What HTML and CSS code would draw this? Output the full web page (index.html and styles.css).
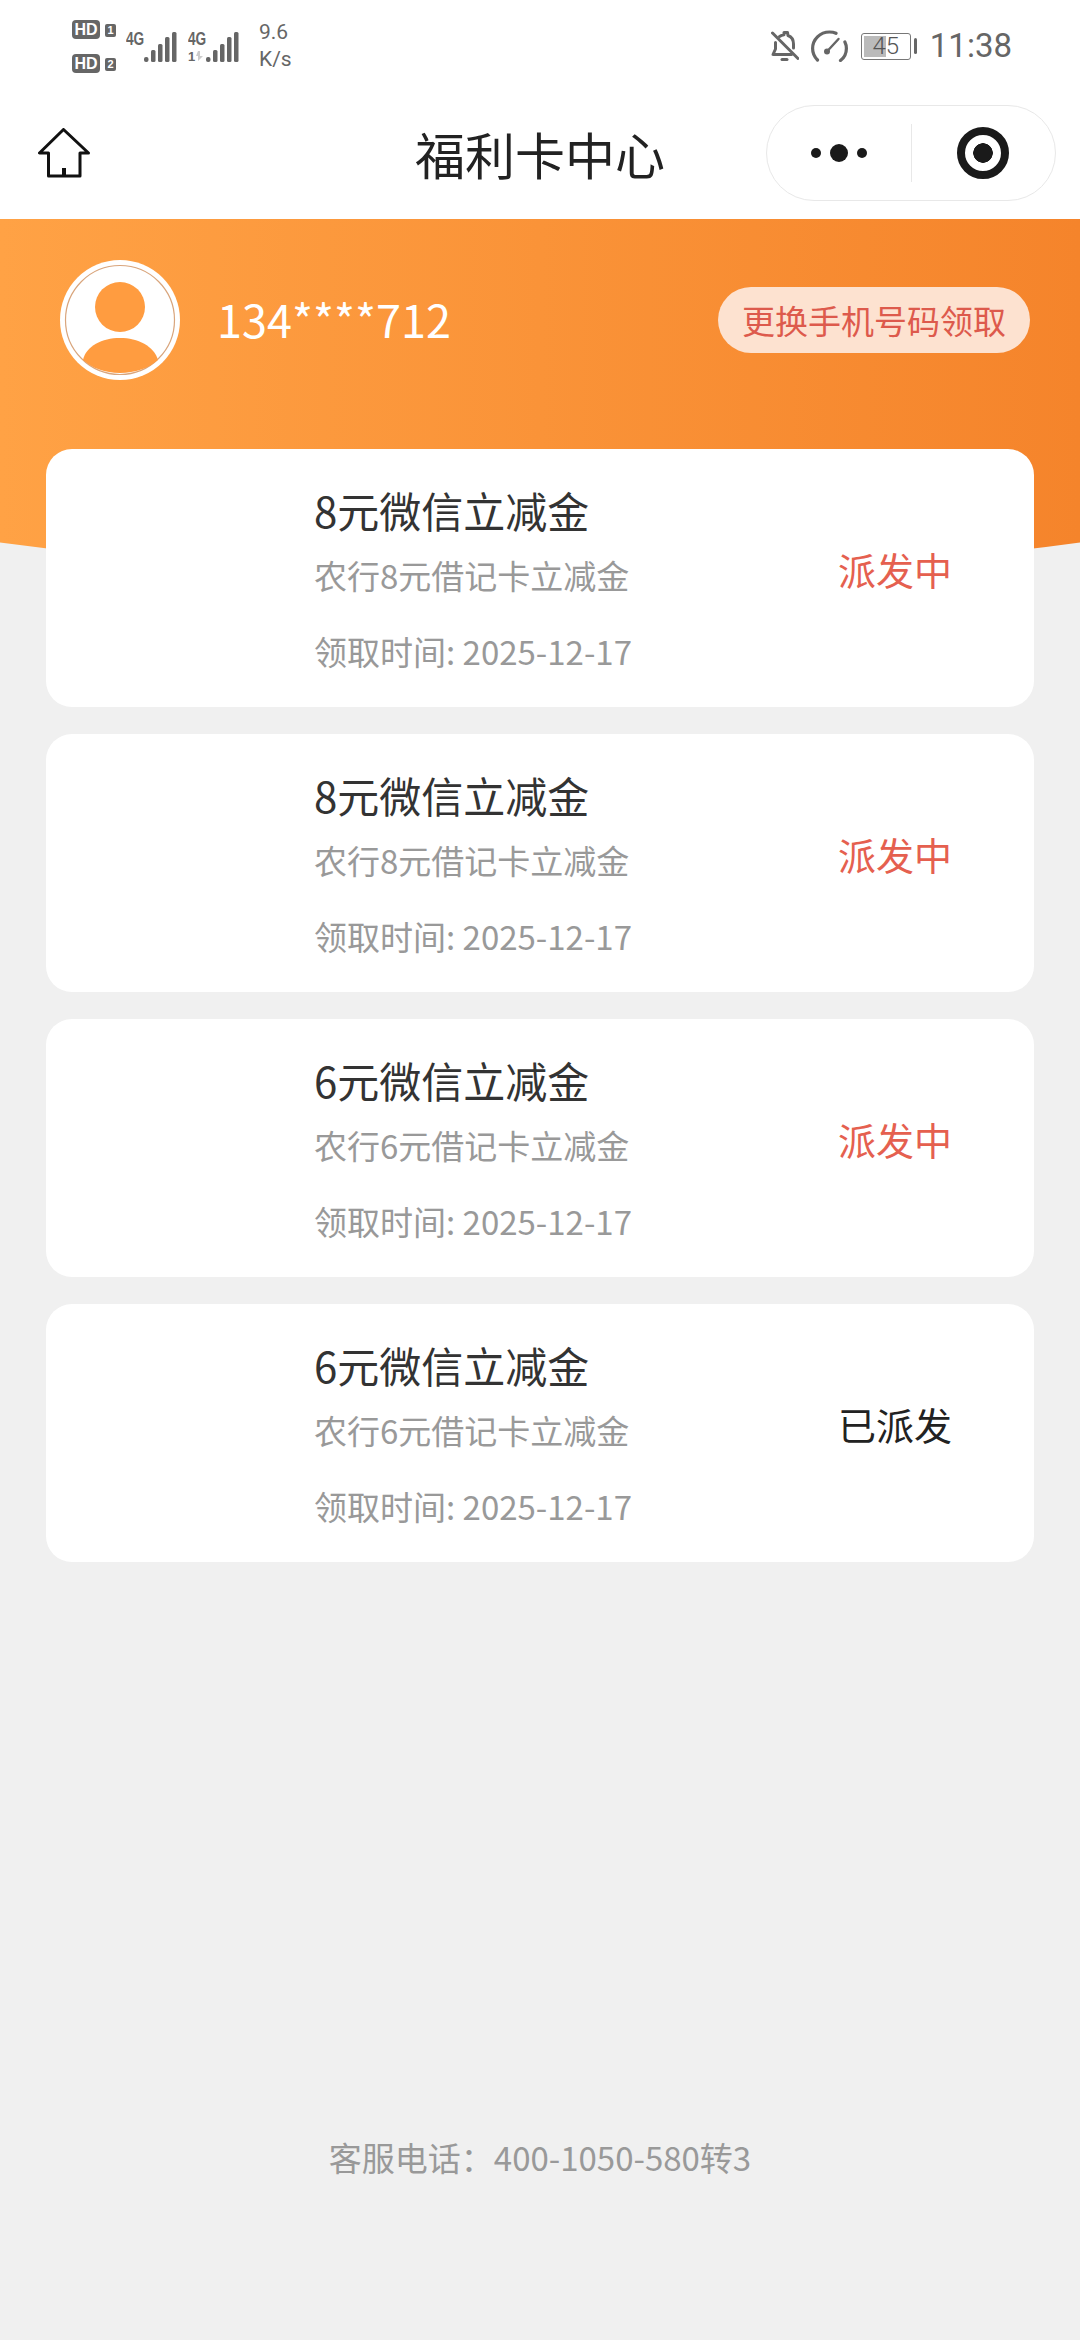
FILE: index.html
```html
<!DOCTYPE html>
<html lang="zh-CN">
<head>
  <meta charset="UTF-8">
  <meta name="viewport" content="width=device-width, initial-scale=1.0">
  <title>福利卡中心</title>
  <link rel="stylesheet" href="styles.css">
</head>
<body>
  <div class="status-bar">
    <div class="status-left">
      <div class="hd-col">
        <div class="hd-row"><span class="hd">HD</span><span class="sim">1</span></div>
        <div class="hd-row"><span class="hd">HD</span><span class="sim">2</span></div>
      </div>
      <div class="net">
        <div class="net-label"><span class="net-type">4G</span></div>
        <svg class="bars" width="33" height="30" viewBox="0 0 33 30" fill="#666">
          <rect x="0" y="25" width="4.500" height="5" rx="2"/><rect x="7" y="18" width="4.500" height="12" rx="1.500"/><rect x="14" y="12" width="4.500" height="18" rx="1.500"/><rect x="21" y="5" width="4.500" height="25" rx="1.500"/><rect x="28" y="0" width="4.500" height="30" rx="1.500"/>
        </svg>
      </div>
      <div class="net net-second">
        <div class="net-label">
          <span class="net-type">4G</span>
          <div class="net-sub">
            <span class="net-one">1</span>
            <svg width="7" height="10" viewBox="0 0 7 10" fill="#ccc"><path d="M2 0h2v5h3L2 10V5H0z"/></svg>
          </div>
        </div>
        <svg class="bars" width="33" height="30" viewBox="0 0 33 30" fill="#666">
          <rect x="0" y="25" width="4.500" height="5" rx="2"/><rect x="7" y="18" width="4.500" height="12" rx="1.500"/><rect x="14" y="12" width="4.500" height="18" rx="1.500"/><rect x="21" y="5" width="4.500" height="25" rx="1.500"/><rect x="28" y="0" width="4.500" height="30" rx="1.500"/>
        </svg>
      </div>
      <div class="speed">9.6<br>K/s</div>
    </div>
    <div class="status-right">
      <svg class="bell" width="28" height="30" viewBox="0 0 28 30" fill="none" stroke="#666" stroke-width="3" stroke-linecap="round" stroke-linejoin="round">
        <path d="M8.500 5.500C10 4.500 11.500 4 13 3.800V1.500h3.500L17 4.500c4 1.500 5.500 5 5.500 8.500v4"/>
        <path d="M4.500 11.500V18L2 23.500h18.500"/>
        <path d="M11 28.500h5"/>
        <path d="M1.500 2L27 27.500"/>
      </svg>
      <svg class="gauge" width="37" height="32" viewBox="0 0 37 32" fill="none" stroke="#666" stroke-width="3.200" stroke-linecap="round">
        <path d="M6.500 30C3 26.500 1.600 22.500 1.600 18.500 1.600 9.500 9 2 18.500 2c2.500 0 4.500 .4 6.500 1.300"/>
        <path d="M29.500 30.500c4-3 5.900-7.500 5.900-12 0-2.500-.5-4.500-1.500-6.500"/>
        <path d="M16 21.500L27.500 9" stroke-width="2.400"/>
        <circle cx="16" cy="21.500" r="3" fill="#666" stroke="none"/>
      </svg>
      <div class="battery"><span class="battery-fill"></span><span class="battery-num">45</span></div>
      <span class="battery-tip"></span>
      <span class="clock">11:38</span>
    </div>
  </div>

  <div class="nav-bar">
    <svg class="home-icon" width="52" height="50" viewBox="0 0 52 50" fill="none" stroke="#111" stroke-width="3" stroke-linejoin="round" stroke-linecap="round">
      <path d="M25.500 1.500L1.500 25H10.500V48H42V25H50.500Z"/>
      <rect x="24" y="40" width="4" height="8" fill="#111" stroke="none"/>
    </svg>
    <div class="nav-title">福利卡中心</div>
    <div class="capsule">
      <div class="capsule-part">
        <span class="dot"></span><span class="dot dot-big"></span><span class="dot"></span>
      </div>
      <span class="capsule-line"></span>
      <div class="capsule-part">
        <span class="target"></span>
      </div>
    </div>
  </div>

  <div class="header">
    <div class="user-row">
      <svg class="avatar" width="120" height="120" viewBox="0 0 120 120">
        <circle cx="60" cy="60" r="60" fill="#fff"/>
        <circle cx="60" cy="60" r="54.500" fill="none" stroke="#d9a57c" stroke-width="1.200"/>
        <circle cx="60" cy="47" r="25" fill="#ff9c40"/>
        <path d="M23 100C26 86 42 78 60 78s34 8 38 22C89 108 75 113 60 113S32 108 23 100Z" fill="#ff9c40"/>
      </svg>
      <div class="phone">134****712</div>
      <div class="change-btn">更换手机号码领取</div>
    </div>
  </div>

  <div class="card-list">
    <div class="card">
      <div class="card-info">
        <div class="card-title">8元微信立减金</div>
        <div class="card-sub">农行8元借记卡立减金</div>
        <div class="card-time">领取时间: 2025-12-17</div>
      </div>
      <div class="card-status pending">派发中</div>
    </div>
    <div class="card">
      <div class="card-info">
        <div class="card-title">8元微信立减金</div>
        <div class="card-sub">农行8元借记卡立减金</div>
        <div class="card-time">领取时间: 2025-12-17</div>
      </div>
      <div class="card-status pending">派发中</div>
    </div>
    <div class="card">
      <div class="card-info">
        <div class="card-title">6元微信立减金</div>
        <div class="card-sub">农行6元借记卡立减金</div>
        <div class="card-time">领取时间: 2025-12-17</div>
      </div>
      <div class="card-status pending">派发中</div>
    </div>
    <div class="card">
      <div class="card-info">
        <div class="card-title">6元微信立减金</div>
        <div class="card-sub">农行6元借记卡立减金</div>
        <div class="card-time">领取时间: 2025-12-17</div>
      </div>
      <div class="card-status">已派发</div>
    </div>
  </div>

  <div class="footer">客服电话：400-1050-580转3</div>
</body>
</html>
```

FILE: styles.css
```css
body {
  margin: 0;
  width: 1080px;
  height: 2340px;
  overflow: hidden;
  background-color: #f0f0f0;
  font-family: "Noto Sans CJK SC", "Noto Sans", sans-serif;
  color: #333;
}

/* status bar */
.status-bar {
  height: 84px;
  box-sizing: border-box;
  padding: 8px 68px 0 72px;
  display: flex;
  justify-content: space-between;
  align-items: center;
  background-color: #fff;
  color: #666;
}
.status-left {
  display: flex;
  align-items: center;
}
.hd-col {
  display: flex;
  flex-direction: column;
  gap: 15px;
}
.hd-row {
  display: flex;
  align-items: center;
  gap: 5px;
}
.hd {
  width: 28px;
  height: 19px;
  border-radius: 4px;
  background-color: #666;
  color: #fff;
  font: bold 16px/19px "Liberation Sans", sans-serif;
  text-align: center;
}
.sim {
  width: 11px;
  height: 13px;
  margin-top: 2px;
  border-radius: 2px;
  background-color: #666;
  color: #fff;
  font: bold 11px/13px "Liberation Sans", sans-serif;
  text-align: center;
}
.net {
  display: flex;
  align-items: flex-end;
  height: 31px;
  margin-left: 10px;
}
.net-second {
  margin-left: 11px;
}
.net-label {
  width: 18px;
  height: 31px;
  font: bold 19px/16px "Liberation Sans", sans-serif;
  color: #666;
  white-space: nowrap;
}
.net-type {
  display: block;
  width: 24px;
  transform: scaleX(0.72);
  transform-origin: left center;
}
.net-sub {
  display: flex;
  align-items: center;
  gap: 1px;
  height: 13px;
  margin-top: 3px;
}
.net-one {
  font-size: 13px;
  line-height: 13px;
}
.speed {
  margin-left: 20px;
  font: 21px/27px "Roboto", sans-serif;
  color: #666;
}
.status-right {
  display: flex;
  align-items: center;
}
.bell {
  margin-right: 12px;
}
.gauge {
  margin-right: 13px;
}
.battery {
  position: relative;
  width: 50px;
  height: 27px;
  box-sizing: border-box;
  border: 1.500px solid #777;
  border-radius: 3px;
  overflow: hidden;
}
.battery-fill {
  position: absolute;
  left: 2px;
  top: 2px;
  bottom: 2px;
  width: 22px;
  background-color: #bbb;
}
.battery-num {
  position: absolute;
  left: 0;
  right: 0;
  top: 0;
  text-align: center;
  font: 300 24px/24px "Roboto", sans-serif;
  color: #555;
}
.battery-tip {
  width: 3px;
  height: 16px;
  margin: 0 13px 0 3px;
  border-radius: 2px;
  background-color: #666;
}
.clock {
  font: 33px/40px "Roboto", sans-serif;
  color: #666;
}

/* nav bar */
.nav-bar {
  height: 135px;
  box-sizing: border-box;
  padding: 3px 24px 0 24px;
  display: grid;
  grid-template-columns: minmax(0, 1fr) auto minmax(0, 1fr);
  align-items: center;
  background-color: #fff;
}
.home-icon {
  display: block;
  margin-left: 14px;
}
.nav-title {
  font-size: 50px;
  color: #222;
}
.capsule {
  justify-self: end;
  width: 290px;
  height: 96px;
  box-sizing: border-box;
  display: flex;
  align-items: center;
  border: 1px solid #e8e8e8;
  border-radius: 48px;
}
.capsule-part {
  flex: 1;
  display: flex;
  align-items: center;
  justify-content: center;
  gap: 9px;
}
.capsule-line {
  width: 1px;
  height: 58px;
  background-color: #e8e8e8;
}
.dot {
  width: 10px;
  height: 10px;
  border-radius: 50%;
  background-color: #1a1a1a;
}
.dot-big {
  width: 18px;
  height: 18px;
}
.target {
  width: 52px;
  height: 52px;
  box-sizing: border-box;
  border: 8px solid #1a1a1a;
  border-radius: 50%;
  background: radial-gradient(circle, #1a1a1a 0, #1a1a1a 9.500px, #fff 10px);
}

/* orange header */
.header {
  height: 360px;
  box-sizing: border-box;
  padding: 41px 50px 0 60px;
  background: linear-gradient(90deg, #ffa245, #f5842b);
  clip-path: circle(4000px at 50% -3640px);
}
.user-row {
  display: flex;
  align-items: center;
}
.avatar {
  flex: none;
}
.phone {
  margin-left: 37px;
  margin-bottom: 2px;
  flex: 1;
  font-size: 45px;
  line-height: 60px;
  color: #fff;
}
.change-btn {
  height: 66px;
  padding: 0 24px;
  border-radius: 33px;
  background-color: #fde2d0;
  color: #dd5a4c;
  font-size: 33px;
  line-height: 66px;
}

/* cards */
.card-list {
  position: relative;
  margin-top: -130px;
  padding: 0 46px;
  display: flex;
  flex-direction: column;
  gap: 27px;
}
.card {
  height: 258px;
  box-sizing: border-box;
  padding: 0 82px 20px 268px;
  display: flex;
  align-items: center;
  justify-content: space-between;
  border-radius: 26px;
  background-color: #fff;
}
.card-info {
  display: flex;
  flex-direction: column;
  margin-top: 24px;
}
.card-title {
  font-size: 42px;
  line-height: 62px;
  color: #333;
}
.card-sub {
  font-size: 33px;
  line-height: 62px;
  margin-top: 3px;
  color: #999;
}
.card-time {
  font-size: 33px;
  line-height: 62px;
  margin-top: 14px;
  color: #999;
}
.card-status {
  font-size: 38px;
  color: #222;
}
.card-status.pending {
  color: #e5604f;
}

.footer {
  margin-top: 571px;
  text-align: center;
  font-size: 33px;
  line-height: 48px;
  color: #999;
}
```
